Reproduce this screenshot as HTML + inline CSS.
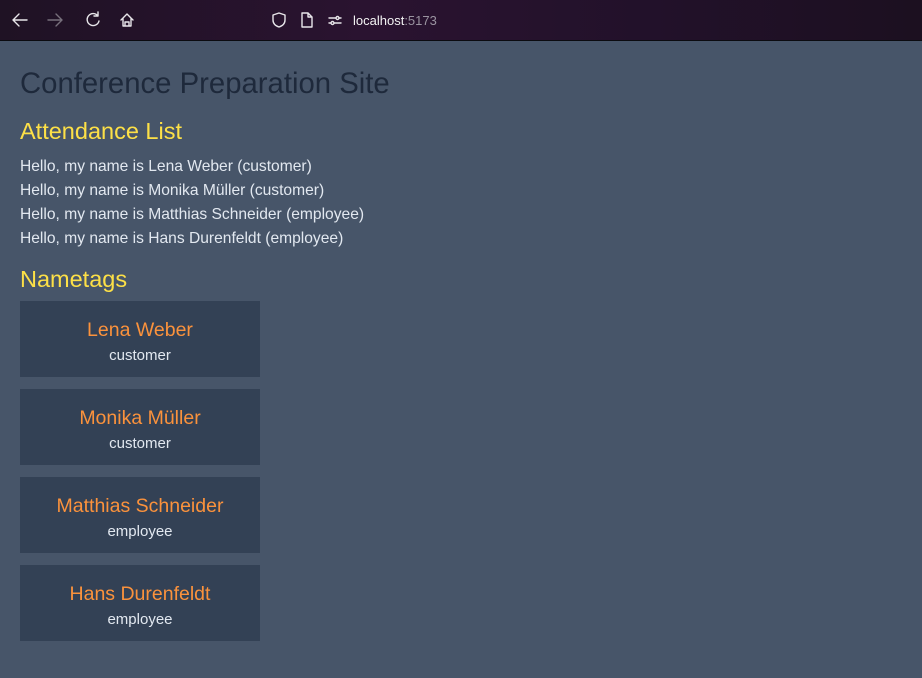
<!DOCTYPE html>
<html><head><meta charset="utf-8"><style>
*{margin:0;padding:0;box-sizing:border-box}
body{width:922px;height:678px;background:#475569;font-family:"Liberation Sans",sans-serif;overflow:hidden;position:relative}
.bar{position:absolute;left:0;top:0;width:922px;height:41px;background:linear-gradient(90deg,#1f1224,#2a1330 40%,#22112a 70%,#1c1020);border-bottom:1px solid #0b0b10}
.bar svg{position:absolute}
.url{position:absolute;left:353px;top:13px;font-size:13px;color:#f2f2f2}
.url span{color:#9a93a0}
h1{position:absolute;left:20px;top:67px;font-size:29.3px;font-weight:normal;color:#1e293b;white-space:nowrap}
h2{position:absolute;left:20px;font-size:23.5px;font-weight:normal;color:#fde047;white-space:nowrap}
.p{position:absolute;left:20px;font-size:15.6px;color:#e2e8f0;white-space:nowrap}
.card{position:absolute;left:20px;width:240px;height:76px;background:#334155;text-align:center}
.card .n{position:absolute;left:0;right:0;top:18px;font-size:19.5px;color:#fb923c;white-space:nowrap}
.card .r{position:absolute;left:0;right:0;top:46px;font-size:15px;color:#e2e8f0}
</style></head><body>
<div class="bar">
<svg width="922" height="41" fill="none" stroke="#e8e6ea" stroke-width="1.4" stroke-linecap="round" stroke-linejoin="round">
<path d="M13 20h14M13 20l6-6M13 20l6 6"/>
<path d="M48 20h14M62 20l-6-6M62 20l-6 6" stroke="#77707c"/>
<path d="M98 16a6 6 0 1 0 1 5M98 12v4h-4"/>
<path d="M121 20l6-6 6 6M123 18v8h8v-8M125 26v-4h4v4"/>
<path d="M279 13l6 2v5c0 4-3 6-6 7-3-1-6-3-6-7v-5z"/>
<path d="M302 13h6l4 4v10h-10zM308 13v4h4"/>
<path d="M329 18h7M339 18h2M329 23h2M334 23h7"/><circle cx="337.5" cy="18" r="1.5"/><circle cx="332.5" cy="23" r="1.5"/>
</svg>
<div class="url">localhost<span>:5173</span></div>
</div>
<h1>Conference Preparation Site</h1>
<h2 style="top:118px">Attendance List</h2>
<div class="p" style="top:158px">Hello, my name is Lena Weber (customer)</div>
<div class="p" style="top:182px">Hello, my name is Monika Müller (customer)</div>
<div class="p" style="top:206px">Hello, my name is Matthias Schneider (employee)</div>
<div class="p" style="top:230px">Hello, my name is Hans Durenfeldt (employee)</div>
<h2 style="top:266px">Nametags</h2>
<div class="card" style="top:301px"><div class="n">Lena Weber</div><div class="r">customer</div></div>
<div class="card" style="top:389px"><div class="n">Monika Müller</div><div class="r">customer</div></div>
<div class="card" style="top:477px"><div class="n">Matthias Schneider</div><div class="r">employee</div></div>
<div class="card" style="top:565px"><div class="n">Hans Durenfeldt</div><div class="r">employee</div></div>
</body></html>
